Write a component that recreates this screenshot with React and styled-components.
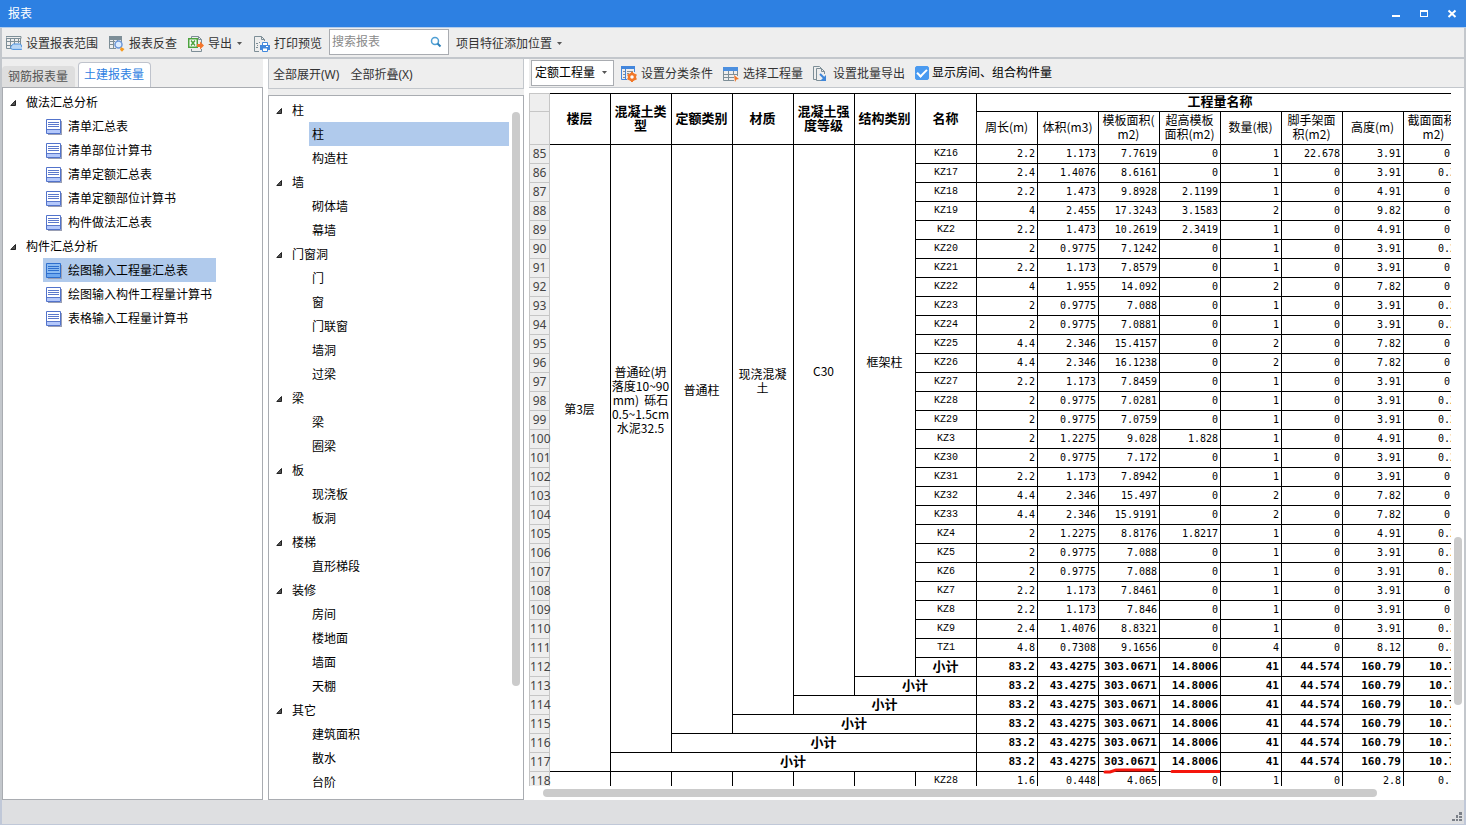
import React, { useState } from "react";

// Styles
import styled, { createGlobalStyle, css } from "styled-components";

const blue = "#2d80e2";
const chrome = "#eeeeee";
const line = "#c3c7cc";
const frame = "#a9acb1";
const selected = "#b0caec";
const uiFont = `"Noto Sans", "Noto Sans CJK SC", sans-serif`;
const sheetFont = `"Noto Sans CJK SC", sans-serif`;
const nameFont = `"Liberation Mono", "Noto Sans CJK SC", monospace`;
const numberFont = `"DejaVu Sans Mono", "Noto Sans CJK SC", monospace`;

// Data
const reports = [
  {
    name: "做法汇总分析",
    items: ["清单汇总表", "清单部位计算书", "清单定额汇总表", "清单定额部位计算书", "构件做法汇总表"],
  },
  {
    name: "构件汇总分析",
    items: ["绘图输入工程量汇总表", "绘图输入构件工程量计算书", "表格输入工程量计算书"],
  },
];

const components = [
  { name: "柱", items: ["柱", "构造柱"] },
  { name: "墙", items: ["砌体墙", "幕墙"] },
  { name: "门窗洞", items: ["门", "窗", "门联窗", "墙洞", "过梁"] },
  { name: "梁", items: ["梁", "圈梁"] },
  { name: "板", items: ["现浇板", "板洞"] },
  { name: "楼梯", items: ["直形梯段"] },
  { name: "装修", items: ["房间", "楼地面", "墙面", "天棚"] },
  { name: "其它", items: ["建筑面积", "散水", "台阶"] },
];

const groupHeads = ["楼层", "混凝土类\n型", "定额类别", "材质", "混凝土强\n度等级", "结构类别", "名称"];

const valueHeads = [
  "周长(m)",
  "体积(m3)",
  "模板面积(\nm2)",
  "超高模板\n面积(m2)",
  "数量(根)",
  "脚手架面\n积(m2)",
  "高度(m)",
  "截面面积(\nm2)",
];

const merged = [
  "第3层",
  "普通砼(坍\n落度10~90\nmm)  砾石\n0.5~1.5cm\n水泥32.5",
  "普通柱",
  "现浇混凝\n土",
  "C30",
  "框架柱",
];

const rows = [
  ["KZ16", "2.2", "1.173", "7.7619", "0", "1", "22.678", "3.91", "0.3"],
  ["KZ17", "2.4", "1.4076", "8.6161", "0", "1", "0", "3.91", "0.36"],
  ["KZ18", "2.2", "1.473", "9.8928", "2.1199", "1", "0", "4.91", "0.3"],
  ["KZ19", "4", "2.455", "17.3243", "3.1583", "2", "0", "9.82", "0.5"],
  ["KZ2", "2.2", "1.473", "10.2619", "2.3419", "1", "0", "4.91", "0.3"],
  ["KZ20", "2", "0.9775", "7.1242", "0", "1", "0", "3.91", "0.25"],
  ["KZ21", "2.2", "1.173", "7.8579", "0", "1", "0", "3.91", "0.3"],
  ["KZ22", "4", "1.955", "14.092", "0", "2", "0", "7.82", "0.5"],
  ["KZ23", "2", "0.9775", "7.088", "0", "1", "0", "3.91", "0.25"],
  ["KZ24", "2", "0.9775", "7.0881", "0", "1", "0", "3.91", "0.25"],
  ["KZ25", "4.4", "2.346", "15.4157", "0", "2", "0", "7.82", "0.6"],
  ["KZ26", "4.4", "2.346", "16.1238", "0", "2", "0", "7.82", "0.6"],
  ["KZ27", "2.2", "1.173", "7.8459", "0", "1", "0", "3.91", "0.3"],
  ["KZ28", "2", "0.9775", "7.0281", "0", "1", "0", "3.91", "0.25"],
  ["KZ29", "2", "0.9775", "7.0759", "0", "1", "0", "3.91", "0.25"],
  ["KZ3", "2", "1.2275", "9.028", "1.828", "1", "0", "4.91", "0.25"],
  ["KZ30", "2", "0.9775", "7.172", "0", "1", "0", "3.91", "0.25"],
  ["KZ31", "2.2", "1.173", "7.8942", "0", "1", "0", "3.91", "0.3"],
  ["KZ32", "4.4", "2.346", "15.497", "0", "2", "0", "7.82", "0.6"],
  ["KZ33", "4.4", "2.346", "15.9191", "0", "2", "0", "7.82", "0.6"],
  ["KZ4", "2", "1.2275", "8.8176", "1.8217", "1", "0", "4.91", "0.25"],
  ["KZ5", "2", "0.9775", "7.088", "0", "1", "0", "3.91", "0.25"],
  ["KZ6", "2", "0.9775", "7.088", "0", "1", "0", "3.91", "0.25"],
  ["KZ7", "2.2", "1.173", "7.8461", "0", "1", "0", "3.91", "0.3"],
  ["KZ8", "2.2", "1.173", "7.846", "0", "1", "0", "3.91", "0.3"],
  ["KZ9", "2.4", "1.4076", "8.8321", "0", "1", "0", "3.91", "0.36"],
  ["TZ1", "4.8", "0.7308", "9.1656", "0", "4", "0", "8.12", "0.36"],
];

const totals = ["83.2", "43.4275", "303.0671", "14.8006", "41", "44.574", "160.79", "10.71"];
const nextRow = ["KZ28", "1.6", "0.448", "4.065", "0", "1", "0", "2.8", "0.16"];
const firstLine = 85;
const subtotalSpans = [1, 2, 3, 4, 5, 6];

// Icons
const Icon = ({ children }) => (
  <svg width="16" height="16" viewBox="0 0 16 16" fill="none" aria-hidden="true">
    {children}
  </svg>
);

const RangeIcon = () => (
  <Icon>
    <path d="M0 .5h15v2H0zM.5 2v10.500H6M4.500 2v10M8.500 2v6M12.500 2v5M0 5.500h15M0 9.500h7M14.500 2v6" stroke="#7d8e97" />
    <path d="M7.500 8h6a2 2 0 0 1 2 2v.6a1.400 1.400 0 0 1 0 2.800H6.700a2 2 0 0 1-.7-3.900A2 2 0 0 1 7.500 8z" fill="#b9d7f6" stroke="#4a90dd" />
  </Icon>
);

const LookupIcon = () => (
  <Icon>
    <path d="M0 0h13v4H0z" fill="#7d8e97" />
    <path d="M.5 3v9.500H7M4.500 4v8M8.500 4v2M12.500 4v2M0 8.500h5M0 5.500h6" stroke="#7d8e97" />
    <circle cx="9.500" cy="8.500" r="3.500" fill="#dcecff" stroke="#6c97d9" strokeWidth="1.500" />
    <path d="M12 11l3.500 2-2.500 2.800-2-2z" fill="#f79a1f" />
  </Icon>
);

const ExportIcon = () => (
  <Icon>
    <path d="M3.500 2V.5h7l3 3V8M3.500 13v2.500h10V13M10.500.5v3h3" stroke="#7d8e97" />
    <path d="M.75 2.750h8.500v8.500H.75z" fill="#fff" stroke="#4da33f" strokeWidth="1.500" />
    <path d="M3 4.500l4 5M7 4.500l-4 5" stroke="#4da33f" strokeWidth="1.500" />
    <path d="M9 8h3V5.500l4 4-4 4V11H9z" fill="#f3752b" />
  </Icon>
);

const PrintIcon = () => (
  <Icon>
    <path d="M5 15.500H.5V.5h7l3 3V5M7.500.5v3h3" stroke="#7d8e97" />
    <path d="M2 7h2v1H2zM3 9h1v1H3zM2 11h2v1H2zM5 6h1v1H5z" fill="#7d8e97" />
    <path d="M6 9h10v5h-2v-2H8v2H6z" fill="#4288dc" />
    <path d="M8.500 9V6.500h5V9M8.500 12h5v3.500h-5z" fill="#fff" stroke="#4288dc" />
    <path d="M12 10h2v1h-2z" fill="#fff" />
  </Icon>
);

const SearchIcon = () => (
  <svg width="12" height="12" viewBox="0 0 12 12" fill="none" aria-hidden="true">
    <circle cx="5" cy="5" r="3.500" stroke="#4f9fd4" strokeWidth="1.500" />
    <path d="M7.500 7.500l3 3" stroke="#2d7fb8" strokeWidth="2" />
  </svg>
);

const SortIcon = () => (
  <Icon>
    <path d="M0 0h14v3H0z" fill="#4386dc" />
    <path d="M.5 2v11.500H6M4.500 2v11M13.500 2v4" stroke="#4386dc" />
    <path d="M2 5h2v1H2zM2 8h2v1H2zM2 11h2v1H2zM6 5h6v1H6zM6 7h2v1H6z" fill="#8d8d8d" />
    <circle cx="11" cy="11" r="3" fill="#fff" stroke="#f1792b" strokeWidth="2.500" />
    <path d="M11 6v1.500M11 14.500V16M6.500 8.500l1.500 1M14 12.500l1.500 1M6.500 13.500l1.500-1M14 9.500l1.500-1" stroke="#f1792b" strokeWidth="2" />
  </Icon>
);

const PickIcon = () => (
  <Icon>
    <path d="M0 1h15v4H0z" fill="#4c8fdf" />
    <path d="M.5 5v9.500H11M5.500 5v9M10.500 5v4M14.500 5v5M0 8.500h15M0 11.500h11" stroke="#7d8e97" />
    <path d="M11 9l5 4-2.500.5L12 16z" fill="#f1792b" />
  </Icon>
);

const BatchIcon = () => (
  <Icon>
    <path d="M3 13.500H.5V.5h6l2 2" stroke="#7d8e97" />
    <path d="M8 14.500H3.500v-12h5l3 3V8M8.500 2.500v3h3" stroke="#7d8e97" />
    <path d="M7 8l4 4" stroke="#3f86d8" strokeWidth="2" />
    <path d="M13 9v6H7z" fill="#3f86d8" />
  </Icon>
);

const SheetIcon = ({ active }) => (
  <Icon>
    <path d="M2 16h14V2h-1v13H2z" fill="#9a9fb4" />
    <path d="M.5.5h14v14H.5z" fill={active ? "#8cbcf2" : "#fff"} stroke={active ? "#2e6fce" : "#5273cb"} />
    <path d="M1 11h13v3H1z" fill={active ? "#6ea8ef" : "#b4c8fb"} />
    <path d="M2 3.500h11M2 5.500h11M2 7.500h11M1 10.500h13" stroke={active ? "#2e6fce" : "#5b78cb"} />
  </Icon>
);

const Arrow = () => (
  <svg width="8" height="8" viewBox="0 0 8 8" aria-hidden="true">
    <path d="M5.500 1.500v5H.8z" fill="#555" stroke="#222" />
  </svg>
);

const Caret = () => (
  <svg width="7" height="4" viewBox="0 0 7 4" aria-hidden="true">
    <path d="M1 0h5L3.500 3z" fill="#555" />
  </svg>
);

const Tree = ({ groups, active, onSelect, icons }) => (
  <TreeList>
    {groups.map((group) => (
      <li key={group.name}>
        <GroupRow>
          <Arrow />
          {group.name}
        </GroupRow>
        <ChildList>
          {group.items.map((item) => {
            const key = `${group.name}/${item}`;
            return (
              <li key={key}>
                <Leaf $icons={icons} $active={key === active} onClick={() => onSelect(key)}>
                  {icons && <SheetIcon active={key === active} />}
                  {item}
                </Leaf>
              </li>
            );
          })}
        </ChildList>
      </li>
    ))}
  </TreeList>
);

const Scrollbar = ({ before, size, after, horizontal }) => (
  <Track $horizontal={horizontal}>
    <Space $grow={before} />
    <Thumb $grow={size} />
    <Space $grow={after} />
  </Track>
);

const Sheet = () => (
  <Table>
    <colgroup>
      <HeadCol />
      {[...groupHeads, ...valueHeads].map((head) => (
        <Col key={head} />
      ))}
    </colgroup>
    <thead>
      <Row>
        <LineNo as="td" $first />
        {groupHeads.map((head) => (
          <Head key={head} rowSpan={2} $first>
            {head}
          </Head>
        ))}
        <Head colSpan={8} $first>
          工程量名称
        </Head>
      </Row>
      <HeadRow>
        <LineNo as="td" />
        {valueHeads.map((head) => (
          <SubHead key={head}>{head}</SubHead>
        ))}
      </HeadRow>
    </thead>
    <tbody>
      {rows.map(([name, ...values], i) => (
        <Row key={i}>
          <LineNo>{firstLine + i}</LineNo>
          {i === 0 &&
            merged.map((text, col) => (
              <Merged key={text} rowSpan={33 - col}>
                {text}
              </Merged>
            ))}
          <Name>{name}</Name>
          {values.map((value, col) => (
            <Num key={col}>{value}</Num>
          ))}
        </Row>
      ))}
      {subtotalSpans.map((span, i) => (
        <Row key={span}>
          <LineNo>{firstLine + rows.length + i}</LineNo>
          <Head as="td" colSpan={span}>
            小计
          </Head>
          {totals.map((value, col) => (
            <Num key={col} $bold>
              {value}
              {span === 6 && col === 2 && (
                <Mark viewBox="0 0 60 8" aria-hidden="true">
                  <path d="M6 6h5l6-2h37" />
                </Mark>
              )}
              {span === 6 && col === 3 && (
                <Mark viewBox="0 0 60 8" aria-hidden="true">
                  <path d="M12 5.500h48" />
                </Mark>
              )}
            </Num>
          ))}
        </Row>
      ))}
      <Row>
        <LineNo>118</LineNo>
        {merged.map((text) => (
          <Name key={text} />
        ))}
        <Name>{nextRow[0]}</Name>
        {nextRow.slice(1).map((value, col) => (
          <Num key={col}>{value}</Num>
        ))}
      </Row>
    </tbody>
  </Table>
);

const App = () => {
  const [report, setReport] = useState("构件汇总分析/绘图输入工程量汇总表");
  const [component, setComponent] = useState("柱/柱");

  return (
    <Window>
      <GlobalStyle />
      <TitleBar>
        <Title>报表</Title>
        <WindowButton aria-label="最小化">
          <svg width="10" height="10" viewBox="0 0 10 10">
            <path d="M1 7h8" stroke="#fff" strokeWidth="2" />
          </svg>
        </WindowButton>
        <WindowButton aria-label="最大化">
          <svg width="10" height="10" viewBox="0 0 10 10">
            <path d="M1 1h8v7H1zM2 3v4h6V3z" fill="#fff" fillRule="evenodd" />
          </svg>
        </WindowButton>
        <WindowButton aria-label="关闭">
          <svg width="10" height="10" viewBox="0 0 10 10">
            <path d="M1.500 1.500l7 6.500M8.500 1.500l-7 6.500" stroke="#fff" strokeWidth="2" />
          </svg>
        </WindowButton>
      </TitleBar>

      <Toolbar>
        <ToolButton>
          <RangeIcon />
          设置报表范围
        </ToolButton>
        <ToolButton>
          <LookupIcon />
          报表反查
        </ToolButton>
        <ToolButton>
          <ExportIcon />
          导出
          <Caret />
        </ToolButton>
        <ToolButton>
          <PrintIcon />
          打印预览
        </ToolButton>
        <SearchBox>
          <SearchInput placeholder="搜索报表" aria-label="搜索报表" />
          <SearchIcon />
        </SearchBox>
        <ToolButton>
          项目特征添加位置
          <Caret />
        </ToolButton>
      </Toolbar>

      <Body>
        <ReportPanel>
          <Tabs>
            <Tab>钢筋报表量</Tab>
            <Tab $active>土建报表量</Tab>
          </Tabs>
          <ListBox>
            <Tree groups={reports} active={report} onSelect={setReport} icons />
          </ListBox>
        </ReportPanel>

        <ComponentPanel>
          <FoldBar>
            <ToolButton>全部展开(W)</ToolButton>
            <ToolButton>全部折叠(X)</ToolButton>
          </FoldBar>
          <ListBox>
            <Tree groups={components} active={component} onSelect={setComponent} />
            <Scrollbar before={16} size={574} after={113} />
          </ListBox>
        </ComponentPanel>

        <SheetPanel>
          <SheetBar>
            <SelectBox>
              <Select aria-label="工程量类型" defaultValue="定额工程量">
                <option>定额工程量</option>
                <option>清单工程量</option>
              </Select>
              <Caret />
            </SelectBox>
            <ToolButton>
              <SortIcon />
              设置分类条件
            </ToolButton>
            <ToolButton>
              <PickIcon />
              选择工程量
            </ToolButton>
            <ToolButton>
              <BatchIcon />
              设置批量导出
            </ToolButton>
            <CheckLabel>
              <CheckBox type="checkbox" defaultChecked />
              显示房间、组合构件量
            </CheckLabel>
          </SheetBar>
          <SheetArea>
            <Viewport>
              <Sheet />
            </Viewport>
            <Scrollbar before={444} size={168} after={81} />
            <Scrollbar horizontal before={14} size={834} after={74} />
          </SheetArea>
        </SheetPanel>
      </Body>

      <StatusBar>
        <svg width="11" height="10" viewBox="0 0 11 10" aria-hidden="true">
          <path
            d="M7 0h3v3H7zM4 3h2v3H4zM7 4h3v2H7zM0 7h3v2H0zM4 7h2v2H4zM7 7h3v2H7z"
            fill="#7b8088"
          />
        </svg>
      </StatusBar>
    </Window>
  );
};

// Styles
const GlobalStyle = createGlobalStyle`
  * {
    box-sizing: border-box;
  }
  body {
    margin: 0;
    font-family: ${uiFont};
    font-size: 12px;
    line-height: 16px;
    color: #000;
  }
  button, input, select {
    font: inherit;
    color: inherit;
    margin: 0;
  }
  svg {
    flex: none;
  }
`;

const Window = styled.div`
  height: 100vh;
  display: flex;
  flex-direction: column;
  background: #fff;
`;

const TitleBar = styled.header`
  flex: none;
  height: 28px;
  display: flex;
  align-items: center;
  background: ${blue};
  border-bottom: 1px solid #b3cdec;
  color: #fff;
`;

const Title = styled.h1`
  flex: 1;
  margin: 0;
  padding-left: 8px;
  font-size: 12px;
  font-weight: 400;
`;

const WindowButton = styled.button`
  width: 28px;
  height: 27px;
  padding: 0;
  display: flex;
  align-items: center;
  justify-content: center;
  background: none;
  border: 0;
`;

const Toolbar = styled.div`
  flex: none;
  height: 31px;
  display: flex;
  align-items: center;
  gap: 11px;
  padding: 0 4px;
  background: ${chrome};
  border: solid ${line};
  border-width: 0 2px 2px;
`;

const ToolButton = styled.button`
  display: flex;
  align-items: center;
  gap: 4px;
  padding: 2px 0 0;
  background: none;
  border: 0;
  color: #333;
  white-space: nowrap;
`;

const SearchBox = styled.div`
  width: 120px;
  height: 26px;
  margin: 0 -4px 1px;
  padding: 0 6px 0 2px;
  display: flex;
  align-items: center;
  background: #fff;
  border: 1px solid ${frame};
`;

const SearchInput = styled.input`
  flex: 1;
  min-width: 0;
  padding: 0;
  border: 0;
  outline: 0;
  background: none;
  &::placeholder {
    color: #8a8a8a;
  }
`;

const Body = styled.main`
  flex: 1;
  min-height: 0;
  display: flex;
  gap: 5px;
  border: solid ${line};
  border-width: 0 2px;
`;

const Panel = styled.section`
  min-height: 0;
  display: flex;
  flex-direction: column;
  background: ${chrome};
`;

const ReportPanel = styled(Panel)`
  flex: none;
  width: 261px;
`;

const Tabs = styled.div`
  flex: none;
  height: 28px;
  display: flex;
  align-items: flex-end;
  gap: 3px;
`;

const Tab = styled.button`
  height: 21px;
  padding: 0 7px 0 6px;
  border: 0;
  border-radius: 4px 4px 0 0;
  background: #dedede;
  color: #555;
  ${({ $active }) =>
    $active &&
    css`
      height: 25px;
      padding: 0 6px 0 5px;
      background: #fff;
      border: 1px solid #bfc3cc;
      border-bottom: 0;
      color: ${blue};
    `}
`;

const ListBox = styled.div`
  flex: 1;
  min-height: 0;
  display: flex;
  background: #fff;
  border: 1px solid ${frame};
`;

const ComponentPanel = styled(Panel)`
  flex: none;
  width: 256px;
`;

const FoldBar = styled.div`
  flex: none;
  height: 30px;
  margin-bottom: 6px;
  padding: 0 4px;
  display: flex;
  align-items: center;
  gap: 11px;
  border: solid ${line};
  border-width: 0 1px 1px;
`;

const TreeList = styled.ul`
  flex: 1;
  min-width: 0;
  margin: 0;
  padding: 2px 0 0 7px;
  list-style: none;
  overflow: hidden;
`;

const ChildList = styled.ul`
  margin: 0;
  padding: 0 0 0 33px;
  list-style: none;
`;

const GroupRow = styled.div`
  height: 24px;
  padding-top: 2px;
  display: flex;
  align-items: center;
  gap: 8px;
`;

const Leaf = styled.button`
  width: ${({ $icons }) => ($icons ? "auto" : "100%")};
  height: 24px;
  padding: ${({ $icons }) => ($icons ? "2px 28px 0 3px" : "2px 3px 0")};
  display: flex;
  align-items: center;
  gap: 6px;
  border: 0;
  background: ${({ $active }) => ($active ? selected : "none")};
  white-space: nowrap;
`;

const Track = styled.div`
  flex: none;
  display: flex;
  flex-direction: ${({ $horizontal }) => ($horizontal ? "row" : "column")};
  padding: ${({ $horizontal }) => ($horizontal ? "3px 0" : "0 3px")};
`;

const Space = styled.div`
  flex: ${({ $grow }) => $grow} 0 0;
`;

const Thumb = styled.div`
  flex: ${({ $grow }) => $grow} 0 0;
  min-width: 8px;
  border-radius: 4px;
  background: #cbcbcb;
`;

const SheetPanel = styled(Panel)`
  flex: 1;
  min-width: 0;
  background: #fff;
`;

const SheetBar = styled.div`
  flex: none;
  height: 29px;
  padding: 0 2px;
  display: flex;
  align-items: center;
  gap: 10px;
  background: ${chrome};
  border-bottom: 1px solid ${line};
`;

const SelectBox = styled.div`
  width: 83px;
  height: 26px;
  margin-right: -3px;
  padding: 0 5px 0 3px;
  display: flex;
  align-items: center;
  background: #fff;
  border: 1px solid ${frame};
`;

const Select = styled.select`
  flex: 1;
  min-width: 0;
  padding: 0;
  appearance: none;
  border: 0;
  outline: 0;
  background: none;
`;

const CheckLabel = styled.label`
  display: flex;
  align-items: center;
  gap: 3px;
  white-space: nowrap;
`;

const CheckBox = styled.input`
  appearance: none;
  width: 14px;
  height: 14px;
  display: grid;
  place-items: center;
  border-radius: 2px;
  border: 1px solid #4a9af0;
  background: #fff;
  &:checked {
    background: #4a9af0;
  }
  &:checked::before {
    content: "";
    width: 8px;
    height: 4px;
    margin-bottom: 3px;
    border: solid #fff;
    border-width: 0 0 2px 2px;
    transform: rotate(-45deg);
  }
`;

const SheetArea = styled.div`
  flex: 1;
  min-height: 0;
  padding-top: 5px;
  display: grid;
  grid-template-columns: minmax(0, 1fr) 13px;
  grid-template-rows: minmax(0, 1fr) 14px;
`;

const Viewport = styled.div`
  overflow: hidden;
`;

const Table = styled.table`
  width: 936px;
  table-layout: fixed;
  border-collapse: separate;
  border-spacing: 0;
  font-family: ${sheetFont};
  line-height: 14px;
`;

const HeadCol = styled.col`
  width: 21px;
`;

const Col = styled.col`
  width: 61px;
`;

const Row = styled.tr`
  height: 19px;
`;

const HeadRow = styled.tr`
  height: 33px;
`;

const cell = css`
  padding: 0;
  border: solid #000;
  border-width: ${({ $first }) => ($first ? "1px 1px 1px 0" : "0 1px 1px 0")};
  text-align: center;
  vertical-align: middle;
  white-space: pre;
`;

const LineNo = styled.th`
  padding: 0;
  border: solid #c6c6c6;
  border-width: ${({ $first }) => ($first ? "1px" : "0 1px 1px")};
  background: ${chrome};
  color: #444;
  font-family: ${uiFont};
  font-size: 12px;
  font-weight: 400;
  text-align: center;
`;

const Head = styled.th`
  ${cell}
  padding: 0 1px 3px 0;
  font-size: 13px;
  font-weight: 700;
`;

const SubHead = styled.th`
  ${cell}
  padding: 0 1px 3px 0;
  font-weight: 400;
`;

const Merged = styled.td`
  ${cell}
  padding: 0 1px 98px 0;
`;

const Name = styled.td`
  ${cell}
  font-family: ${nameFont};
  font-size: 10px;
`;

const Num = styled.td`
  ${cell}
  position: relative;
  padding-right: 2px;
  font-family: ${numberFont};
  font-size: ${({ $bold }) => ($bold ? "11px" : "10px")};
  font-weight: ${({ $bold }) => ($bold ? 700 : 400)};
  text-align: right;
`;

const Mark = styled.svg`
  position: absolute;
  left: 0;
  bottom: -3px;
  width: 60px;
  height: 8px;
  fill: none;
  stroke: #f5160c;
  stroke-width: 3;
  stroke-linecap: round;
`;

const StatusBar = styled.footer`
  flex: none;
  height: 25px;
  padding: 0 1px 2px 0;
  display: flex;
  align-items: flex-end;
  justify-content: flex-end;
  background: #dedfe1;
  border: solid #c0c8d8;
  border-width: 0 2px 1px;
`;

export default App;
